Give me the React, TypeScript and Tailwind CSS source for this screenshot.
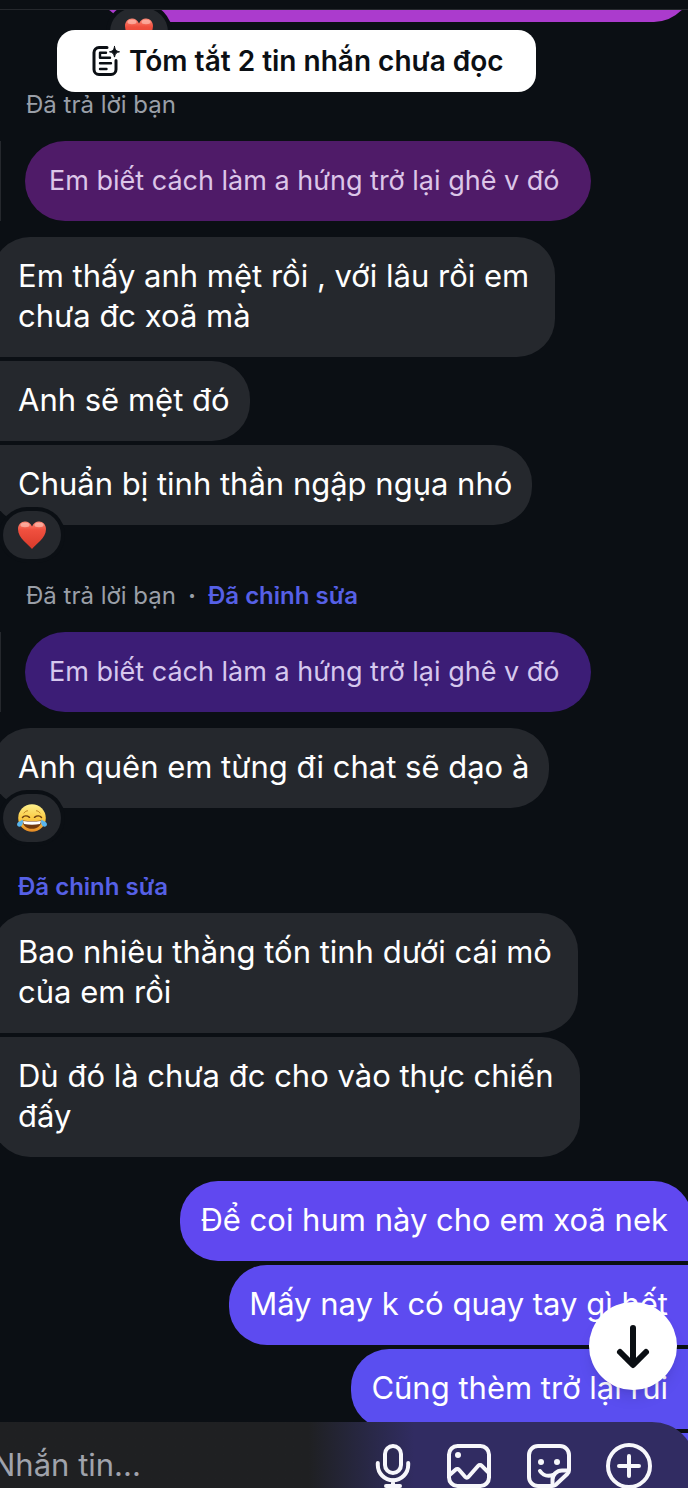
import React from "react"
import clsx from "clsx"

type Reaction = "heart" | "joy"

type Message = {
  text: string
  mine?: boolean
  reaction?: Reaction
  className?: string
}

function HeartIcon() {
  return (
    <svg viewBox="0 0 28 28" className="size-7" aria-label="Yêu thích">
      <defs>
        <linearGradient id="heart" x1="0" y1="0" x2="0" y2="1">
          <stop offset="0" stopColor="#fb8a78" />
          <stop offset="0.3" stopColor="#f0503f" />
          <stop offset="1" stopColor="#d93a2a" />
        </linearGradient>
      </defs>
      <path
        d="M14 28C10.500 23 0 17.500 0 8.200 0 3.600 3.200 0.600 7 0.600c3 0 5.500 1.700 7 4.800 1.500-3.100 4-4.800 7-4.800 3.800 0 7 3 7 7.600C28 17.500 17.500 23 14 28z"
        fill="url(#heart)"
      />
      <ellipse cx="7" cy="4" rx="4.500" ry="2.200" fill="#ffc9be" opacity="0.6" />
      <ellipse cx="21" cy="4" rx="4.500" ry="2.200" fill="#ffc9be" opacity="0.6" />
    </svg>
  )
}

function JoyIcon() {
  return (
    <svg viewBox="0 0 30 28" className="h-7 w-[30px]" aria-label="Cười ra nước mắt">
      <defs>
        <linearGradient id="joy" x1="0" y1="0" x2="0" y2="1">
          <stop offset="0" stopColor="#fdf08c" />
          <stop offset="0.5" stopColor="#fbcb45" />
          <stop offset="1" stopColor="#e58a25" />
        </linearGradient>
      </defs>
      <circle cx="15" cy="14" r="13.800" fill="url(#joy)" />
      <path
        d="M5.500 13.500c1.500-1.800 4.500-2 7-.2M17.500 13.300c2.500-1.800 5.500-1.600 7 .2"
        fill="none"
        stroke="#6b3d10"
        strokeWidth="1.500"
        strokeLinecap="round"
      />
      <path
        d="M7 9c.9-1.300 2-2 3.500-2.200M23 9c-.9-1.300-2-2-3.500-2.200"
        fill="none"
        stroke="#b9791c"
        strokeWidth="1"
        strokeLinecap="round"
      />
      <path d="M5.500 16.500c6 .8 13 .8 19 0 0 5-4 8.300-9.500 8.300s-9.500-3.300-9.500-8.300z" fill="#70380f" />
      <path d="M6.200 16.900c5.600.7 12 .7 17.600 0 0 1.400-.4 2.400-.9 3.200-4.800.8-11 .8-15.800 0-.5-.8-.9-1.800-.9-3.200z" fill="#fff" />
      <path d="M5.600 15.500c1 3.500-.4 7-3 7.200-2.600.1-3.400-2.800-1.500-4.500 1.300-1.100 3.300-1.300 4.500-2.700z" fill="#58b5ee" />
      <path d="M24.400 15.500c-1 3.500.4 7 3 7.200 2.600.1 3.400-2.800 1.500-4.500-1.300-1.100-3.300-1.300-4.500-2.700z" fill="#58b5ee" />
    </svg>
  )
}

function SummaryIcon() {
  return (
    <svg
      viewBox="0 0 30 32"
      className="h-8 w-[30px] shrink-0"
      fill="none"
      stroke="currentColor"
      strokeWidth="3"
      strokeLinecap="round"
      strokeLinejoin="round"
      aria-hidden="true"
    >
      <path d="M16 2.500H8a5 5 0 0 0-5 5v17a5 5 0 0 0 5 5h12a5 5 0 0 0 5-5v-9" />
      <path d="M15 7.800H9v5h10M9 18.300h11M9 24h6.500" strokeWidth="2.400" />
      <path
        d="M23.500 1.500c.7 3.600 1.700 4.600 5 5.300-3.300.7-4.300 1.700-5 5.300-.7-3.600-1.700-4.600-5-5.300 3.300-.7 4.300-1.700 5-5.300z"
        fill="currentColor"
        strokeWidth="1"
      />
    </svg>
  )
}

const iconProps = {
  fill: "none",
  stroke: "currentColor",
  strokeWidth: 4,
  strokeLinecap: "round",
  strokeLinejoin: "round",
} as const

function MicIcon() {
  return (
    <svg viewBox="0 0 40 48" className="h-12 w-10" {...iconProps}>
      <rect x="12" y="4" width="16" height="27" rx="8" />
      <path d="M4.800 21v2a15.200 15.200 0 0 0 30.400 0v-2M20 38v6M13 44h14" />
    </svg>
  )
}

function ImageIcon() {
  return (
    <svg viewBox="0 0 48 48" className="size-12" {...iconProps}>
      <rect x="4" y="4" width="40" height="40" rx="8.500" />
      <path d="M4 33.500l6.500-5.800a2.500 2.500 0 0 1 3.500.1l6.300 7.200a2 2 0 0 0 3 0L33.200 23.800a2.500 2.500 0 0 1 3.600 0L44 31" />
      <circle cx="13" cy="13" r="3" fill="currentColor" stroke="none" />
    </svg>
  )
}

function StickerIcon() {
  return (
    <svg viewBox="0 0 48 48" className="size-12" {...iconProps}>
      <path d="M27 44H13a9 9 0 0 1-9-9V13a9 9 0 0 1 9-9h22a9 9 0 0 1 9 9v15c0 1.500-.5 2.700-1.500 3.700L30.500 43c-.9.700-2 1-3.500 1z" />
      <path d="M27.500 43.500V38a9.500 9.500 0 0 1 9.500-9.500h6.500" />
      <path d="M15 29c2 3 5 4.800 8.500 4.800 2 0 3.700-.3 5-1" />
      <circle cx="16" cy="20" r="3" fill="currentColor" stroke="none" />
      <circle cx="32" cy="20" r="3" fill="currentColor" stroke="none" />
    </svg>
  )
}

function PlusIcon() {
  return (
    <svg viewBox="0 0 48 48" className="size-12" {...iconProps}>
      <circle cx="24" cy="24" r="21" />
      <path d="M24 14v20M14 24h20" />
    </svg>
  )
}

function ArrowDownIcon() {
  return (
    <svg viewBox="0 0 48 48" className="size-12" {...iconProps} strokeWidth={6}>
      <path d="M24 6v36M11 30l13 13 13-13" />
    </svg>
  )
}

function ReactionPill({ type }: { type: Reaction }) {
  return (
    <span className="absolute -bottom-[34px] left-[11px] flex h-12 w-[58px] items-center justify-center rounded-full bg-[#25282d] ring-4 ring-[#0b0f14]">
      {type === "heart" ? <HeartIcon /> : <JoyIcon />}
    </span>
  )
}

function Bubble({ text, mine, reaction, className }: Message) {
  const multiline = text.includes("\n")

  return (
    <div
      className={clsx(
        "relative whitespace-pre-line pb-[21px] pt-[19px] text-[31px] leading-10 text-white",
        mine ? "self-end pl-5 pr-6" : "self-start bg-[#25282d] pl-[26px]",
        !mine && (multiline ? "pr-[26px]" : "pr-5"),
        className
      )}
    >
      {text}
      {reaction && <ReactionPill type={reaction} />}
    </div>
  )
}

function Quote({ className }: { className: string }) {
  return (
    <div className="mb-4 ml-2 flex items-center border-l border-[#25282d]">
      <p className={clsx("ml-6 rounded-full py-5 pl-6 pr-8 text-[27px] leading-10", className)}>
        Em biết cách làm a hứng trở lại ghê v đó
      </p>
    </div>
  )
}

function Edited() {
  return <span className="font-semibold text-[#5660e6]">Đã chỉnh sửa</span>
}

export default function App() {
  return (
    <div
      lang="vi"
      className="relative flex h-screen flex-col overflow-hidden bg-[#0b0f14] font-['Inter','Noto_Sans',sans-serif]"
    >
      <header className="h-[10px] shrink-0 border-b border-[#25282d]" />

      <main className="-ml-2 -mr-1 flex min-h-0 flex-1 flex-col overflow-hidden">
        {/* Tin nhắn cũ bị cuộn khuất phía trên */}
        <div className="relative -mt-[68px] ml-[107px] h-20 shrink-0 rounded-[38px] bg-[#ab3bcd]">
          <ReactionPill type="heart" />
        </div>

        <p className="mb-5 mt-[67px] pl-[34px] text-2xl leading-8 text-[#9a9fa8]">
          Đã trả lời bạn
        </p>
        <Quote className="bg-[#4f1b68] text-[#dcc6e8]" />
        <div className="flex flex-col gap-1">
          <Bubble
            text={"Em thấy anh mệt rồi , với lâu rồi em\nchưa đc xoã mà"}
            className="rounded-r-[38px] rounded-tl-[38px]"
          />
          <Bubble text="Anh sẽ mệt đó" className="rounded-r-[38px]" />
          <Bubble
            text="Chuẩn bị tinh thần ngập ngụa nhó"
            reaction="heart"
            className="rounded-r-[38px] rounded-bl-[38px]"
          />
        </div>

        <p className="mb-5 mt-[55px] flex gap-3 pl-[34px] text-2xl leading-8 text-[#9a9fa8]">
          <span>Đã trả lời bạn</span>
          <span className="font-bold">·</span>
          <Edited />
        </p>
        <Quote className="bg-[#3c1d76] text-[#d6c8ee]" />
        <Bubble
          text="Anh quên em từng đi chat sẽ dạo à"
          reaction="joy"
          className="rounded-[38px]"
        />

        <p className="mb-[10px] mt-[63px] pl-[26px] text-2xl leading-8">
          <Edited />
        </p>
        <div className="flex flex-col gap-1">
          <Bubble
            text={"Bao nhiêu thằng tốn tinh dưới cái mỏ\ncủa em rồi"}
            className="rounded-r-[38px] rounded-tl-[38px]"
          />
          <Bubble
            text={"Dù đó là chưa đc cho vào thực chiến\nđấy"}
            className="rounded-r-[38px] rounded-bl-[38px]"
          />
        </div>

        <div className="mt-6 flex flex-col gap-1">
          <Bubble mine text="Để coi hum này cho em xoã nek" className="rounded-l-[38px] rounded-tr-[38px] bg-[#6048f0]" />
          <Bubble mine text="Mấy nay k có quay tay gì hết" className="rounded-l-[38px] bg-[#5d4bf0]" />
          <Bubble mine text="Cũng thèm trở lại rùi" className="rounded-l-[38px] bg-[#5a4ef0]" />
          <div className="h-20 w-1/2 self-end rounded-l-[38px] bg-[#5850f0]" />
        </div>
      </main>

      <button
        type="button"
        className="absolute left-[57px] top-[30px] flex h-[62px] items-center gap-2 whitespace-nowrap rounded-[18px] bg-white pl-[34px] pr-8 text-[28px] font-semibold text-[#0b0f14]"
      >
        <SummaryIcon />
        Tóm tắt 2 tin nhắn chưa đọc
      </button>

      <button
        type="button"
        aria-label="Cuộn xuống"
        className="absolute bottom-[98px] right-[11px] flex size-[88px] items-center justify-center rounded-full bg-white text-[#0b0f14] shadow-lg"
      >
        <ArrowDownIcon />
      </button>

      {/* Thanh soạn tin nhắn */}
      <form className="absolute -left-2 -right-2 bottom-0 flex h-[66px] items-start gap-8 rounded-tr-[44px] bg-linear-to-r from-[#1f2022] from-45% to-[#312c62] to-60% pr-[43px] pt-5 text-[#f7f7fb]">
        <input
          type="text"
          aria-label="Nhắn tin"
          placeholder="Nhắn tin..."
          className="h-[46px] min-w-0 flex-1 bg-transparent text-[31px] outline-none placeholder:text-[#a0a3ac]"
        />
        <button type="button" aria-label="Ghi âm">
          <MicIcon />
        </button>
        <button type="button" aria-label="Chọn ảnh">
          <ImageIcon />
        </button>
        <button type="button" aria-label="Nhãn dán">
          <StickerIcon />
        </button>
        <button type="button" aria-label="Thêm">
          <PlusIcon />
        </button>
      </form>
    </div>
  )
}
